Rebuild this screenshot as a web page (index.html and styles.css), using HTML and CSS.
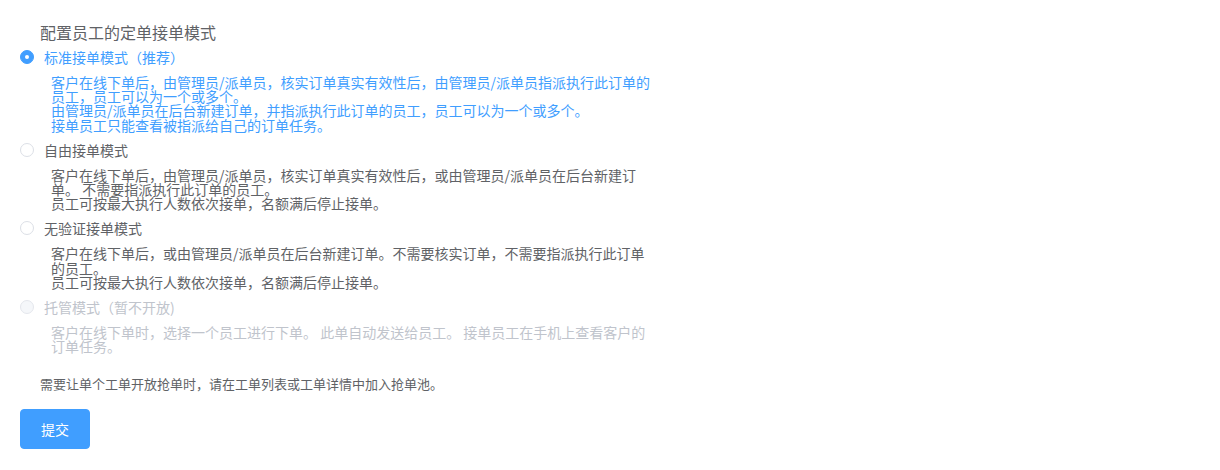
FILE: index.html
```html
<!DOCTYPE html>
<html lang="zh-CN">
<head>
<meta charset="utf-8">
<title>配置员工的定单接单模式</title>
<link rel="stylesheet" href="styles.css">
</head>
<body>
<div class="page">
  <div class="title">配置员工的定单接单模式</div>
  <div class="group">
    <div class="option is-checked">
      <label class="row"><span class="radio"></span><span class="label">标准接单模式（推荐）</span></label>
      <div class="desc">客户在线下单后，由管理员/派单员，核实订单真实有效性后，由管理员/派单员指派执行此订单的员工，员工可以为一个或多个。<br>由管理员/派单员在后台新建订单，并指派执行此订单的员工，员工可以为一个或多个。<br>接单员工只能查看被指派给自己的订单任务。</div>
    </div>
    <div class="option">
      <label class="row"><span class="radio"></span><span class="label">自由接单模式</span></label>
      <div class="desc">客户在线下单后，由管理员/派单员，核实订单真实有效性后，或由管理员/派单员在后台新建订单。 不需要指派执行此订单的员工。<br>员工可按最大执行人数依次接单，名额满后停止接单。</div>
    </div>
    <div class="option">
      <label class="row"><span class="radio"></span><span class="label">无验证接单模式</span></label>
      <div class="desc">客户在线下单后，或由管理员/派单员在后台新建订单。不需要核实订单，不需要指派执行此订单的员工。<br>员工可按最大执行人数依次接单，名额满后停止接单。</div>
    </div>
    <div class="option is-disabled">
      <label class="row"><span class="radio"></span><span class="label">托管模式（暂不开放)</span></label>
      <div class="desc">客户在线下单时，选择一个员工进行下单。 此单自动发送给员工。 接单员工在手机上查看客户的订单任务。</div>
    </div>
  </div>
  <div class="note">需要让单个工单开放抢单时，请在工单列表或工单详情中加入抢单池。</div>
  <button class="btn" type="button">提交</button>
</div>
</body>
</html>
```

FILE: styles.css
```css
html, body {
  margin: 0;
  padding: 0;
  background: #ffffff;
}
body {
  font-family: "Noto Sans CJK SC", "Noto Sans", sans-serif;
  color: #606266;
}
.page {
  padding: 22px 20px 0 20px;
}
.title {
  margin-left: 20px;
  font-size: 16px;
  line-height: 20px;
  color: #606266;
}
.group {
  margin-top: 5px;
  display: flex;
  flex-direction: column;
}
.option {
  display: flex;
  flex-direction: column;
  margin-bottom: 8px;
}
.row {
  display: flex;
  align-items: center;
  height: 20px;
  cursor: pointer;
}
.radio {
  box-sizing: border-box;
  width: 14px;
  height: 14px;
  border: 1px solid #DCDFE6;
  border-radius: 50%;
  background: #ffffff;
  position: relative;
  flex: none;
}
.label {
  padding-left: 10px;
  font-size: 14px;
  line-height: 20px;
  font-weight: 400;
  color: #606266;
}
.desc {
  margin-top: 8px;
  margin-left: 31px;
  width: 600px;
  font-size: 14px;
  line-height: 14.2px;
  color: #606266;
}
.is-checked .radio {
  border-color: #409EFF;
  background: #409EFF;
}
.is-checked .radio::after {
  content: "";
  position: absolute;
  left: 50%;
  top: 50%;
  width: 4px;
  height: 4px;
  margin: -2px 0 0 -2px;
  border-radius: 50%;
  background: #ffffff;
}
.is-checked .label,
.is-checked .desc {
  color: #409EFF;
}
.is-disabled .radio {
  background: #F5F7FA;
  border-color: #E4E7ED;
}
.is-disabled .label,
.is-disabled .desc {
  color: #C0C4CC;
}
.is-disabled .row {
  cursor: not-allowed;
}
.note {
  margin-top: 14px;
  margin-left: 20px;
  font-size: 13px;
  line-height: 18px;
  color: #606266;
}
.btn {
  margin-top: 16px;
  width: 70px;
  height: 40px;
  border: 1px solid #409EFF;
  border-radius: 4px;
  background: #409EFF;
  color: #ffffff;
  font-family: "Noto Sans CJK SC", "Noto Sans", sans-serif;
  font-size: 14px;
  font-weight: 400;
  padding: 0;
  cursor: pointer;
}
```
